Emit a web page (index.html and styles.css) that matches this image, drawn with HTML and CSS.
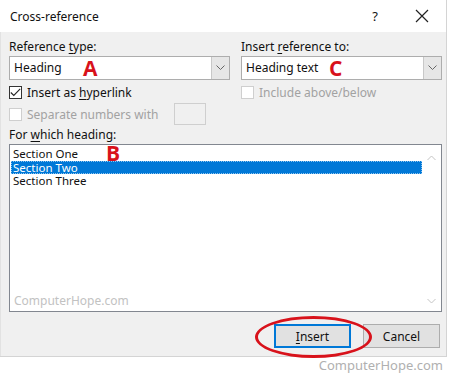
FILE: index.html
```html
<!DOCTYPE html>
<html lang="en">

<head>
  <meta charset="UTF-8" />
  <title>Cross-reference</title>
  <link rel="stylesheet" href="styles.css">
</head>

<body>

  <div class="dialog">
    <div class="titlebar">
      <span class="title">Cross-reference</span>
      <span class="help">?</span>
      <svg class="close" width="14" height="14" viewBox="0 0 14 14">
        <path d="M1 1 L13 13 M13 1 L1 13" stroke="#222" stroke-width="1.2" fill="none" />
      </svg>
    </div>

    <div class="body">
      <div class="cols">
        <div class="col-left">
          <div class="label">Reference <u>t</u>ype:</div>
          <div class="combo">
            <span class="combo-text">Heading</span>
            <span class="combo-btn">
              <svg width="9" height="6" viewBox="0 0 9 6"><path d="M0.5 0.5 L4.5 4.5 L8.5 0.5" stroke="#666" fill="none" /></svg>
            </span>
            <span class="mark mark-a">A</span>
          </div>
          <div class="check-row">
            <span class="checkbox">
              <svg width="11" height="9" viewBox="0 0 11 9"><path d="M0.8 4.5 L3.8 7.5 L10.2 0.8" stroke="#222" stroke-width="1.1" fill="none" /></svg>
            </span>
            <span>Insert as <u>h</u>yperlink</span>
          </div>
        </div>

        <div class="col-right">
          <div class="label">Insert <u>r</u>eference to:</div>
          <div class="combo">
            <span class="combo-text">Heading text</span>
            <span class="combo-btn">
              <svg width="9" height="6" viewBox="0 0 9 6"><path d="M0.5 0.5 L4.5 4.5 L8.5 0.5" stroke="#666" fill="none" /></svg>
            </span>
            <span class="mark mark-c">C</span>
          </div>
          <div class="check-row disabled">
            <span class="checkbox"></span>
            <span>Include above/below</span>
          </div>
        </div>
      </div>

      <div class="sep-row disabled">
        <span class="checkbox"></span>
        <span>Separate numbers with</span>
        <span class="sep-box"></span>
      </div>

      <div class="label list-label">For <u>w</u>hich heading:</div>
      <div class="listbox">
        <div class="items">
          <div class="item">Section One</div>
          <div class="item selected">Section Two</div>
          <div class="item">Section Three</div>
          <div class="watermark">ComputerHope.com</div>
        </div>
        <div class="scrollbar">
          <svg width="9" height="6" viewBox="0 0 9 6"><path d="M0.5 5 L4.5 1 L8.5 5" stroke="#c4c4c4" fill="none" /></svg>
          <svg width="9" height="6" viewBox="0 0 9 6"><path d="M0.5 1 L4.5 5 L8.5 1" stroke="#c4c4c4" fill="none" /></svg>
        </div>
        <span class="mark mark-b">B</span>
      </div>

      <div class="buttons">
        <div class="insert-wrap">
          <button class="btn btn-default"><u>I</u>nsert</button>
          <span class="ring"></span>
        </div>
        <button class="btn">Cancel</button>
      </div>
    </div>
  </div>

  <div class="credit">ComputerHope.com</div>

</body>

</html>
```

FILE: styles.css
```css
body {
  margin: 0;
  background: #fff;
  font-family: "Noto Sans", "Open Sans", sans-serif;
  font-size: 12px;
  color: #111;
}

u {
  text-decoration-thickness: 1px;
  text-underline-offset: 2px;
}

.dialog {
  width: 446px;
  border-right: 1px solid #d4d4d4;
  border-bottom: 1px solid #d4d4d4;
}

.titlebar {
  height: 32px;
  display: flex;
  align-items: center;
  padding: 0 0 0 10px;
  background: #fff;
}

.title {
  flex: 1;
  font-size: 12px;
}

.help {
  font-size: 13px;
  margin-right: 37px;
}

.close {
  margin-right: 17px;
}

.body {
  background: #f0f0f0;
  padding: 7px 5px 8px 8px;
  border-left: 1px solid #e2e2e2;
}

.cols {
  display: grid;
  grid-template-columns: 221px 201px;
  column-gap: 11px;
}

.label {
  height: 17px;
  line-height: 16px;
}

.combo {
  position: relative;
  height: 22px;
  display: flex;
  border: 1px solid #adadad;
  background: #fff;
}

.combo-text {
  flex: 1;
  line-height: 22px;
  padding-left: 4px;
}

.combo-btn {
  width: 17px;
  display: flex;
  align-items: center;
  justify-content: center;
  background: #e6e6e6;
  border-left: 1px solid #c8c8c8;
}

.mark {
  position: absolute;
  color: #d8121b;
  font-family: "Open Sans", sans-serif;
  font-weight: bold;
  font-size: 21px;
  line-height: 1;
}

.mark-a {
  left: 73px;
  top: 1px;
}

.mark-c {
  left: 87px;
  top: 1px;
}

.mark-b {
  left: 96px;
  top: 0;
  line-height: 16px;
}

.check-row {
  display: flex;
  align-items: center;
  gap: 5px;
  height: 16px;
  margin-top: 4px;
}

.checkbox {
  width: 11px;
  height: 11px;
  border: 1px solid #333;
  background: #fff;
  display: flex;
  align-items: center;
  justify-content: center;
}

.disabled {
  color: #a2a2a2;
}

.disabled .checkbox {
  border-color: #cfcfcf;
}

.sep-row {
  display: flex;
  align-items: center;
  gap: 5px;
  height: 22px;
  margin-top: 3px;
}

.sep-box {
  width: 30px;
  height: 20px;
  border: 1px solid #cfcfcf;
  background: #f0f0f0;
  margin-left: 11px;
}

.list-label {
  margin-top: 2px;
}

.listbox {
  position: relative;
  width: 431px;
  height: 166px;
  border: 1px solid #828790;
  background: #fff;
  display: flex;
}

.items {
  flex: 1;
  padding: 2px 0 0 1px;
  position: relative;
}

.item {
  height: 13.5px;
  line-height: 13px;
  padding-left: 2px;
  font-size: 11.5px;
}

.item.selected {
  background: #0078d7;
  color: #fff;
  border: 1px dotted #8ec5f0;
  height: 11.5px;
  line-height: 11px;
  padding-left: 1px;
}

.watermark {
  position: absolute;
  left: 4px;
  bottom: 2px;
  color: #c2c2c2;
  font-size: 12px;
}

.scrollbar {
  width: 19px;
  display: flex;
  flex-direction: column;
  justify-content: space-between;
  align-items: center;
  padding: 10px 0 7px;
}

.buttons {
  display: flex;
  justify-content: flex-end;
  gap: 12px;
  margin-top: 12px;
  padding-right: 1px;
}

.btn {
  width: 77px;
  height: 24px;
  font-family: inherit;
  font-size: 12px;
  color: #111;
  background: #e1e1e1;
  border: 1px solid #adadad;
  padding: 0;
}

.btn-default {
  border: 2px solid #0078d7;
}

.insert-wrap {
  position: relative;
}

.ring {
  position: absolute;
  left: -19px;
  top: -8px;
  width: 111px;
  height: 36px;
  border: 3px solid #d8121b;
  border-radius: 50%;
}

.credit {
  text-align: right;
  padding: 0 6px 0 0;
  line-height: 16px;
  color: #b0b0b0;
  font-size: 13px;
}
```
